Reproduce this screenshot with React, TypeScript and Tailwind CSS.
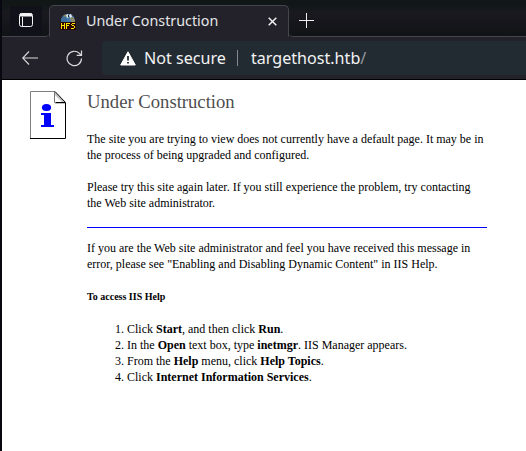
import type { ReactNode } from "react";

function HfsIcon() {
  return (
    <svg width="16" height="16" viewBox="0 0 16 16" className="shrink-0">
      <path d="M1 8V5l2-3 3-2h5l3 3 1 5z" fill="#477caa" />
      <path d="M1 5l2-3 2-1 1 3 2 2-2 2H1z" fill="#3f6d9c" />
      <path d="M3 2l2-1.5 2 1L5 3z" fill="#8b8a58" />
      <path d="M6 1l2-1 1 3-2 1zM9 1l2-1 1 3-2 1z" fill="#e4e8e6" />
      <path d="M10 4l3-1 2 3v2h-4z" fill="#8c8b70" />
      <path d="M8 1h1v2H8z" fill="#15222e" />
      <path d="M0 8h16v8H0z" fill="#2b0808" />
      <path d="M1 9h1v2h2V9h1v6H4v-3H2v3H1zM6 9h4v1H7v1h2v1H7v3H6zM12 9h3v1h-3zM11 10h1v1h-1zM12 11h2v1h-2zM14 12h1v2h-1zM11 14h3v1h-3z" fill="#ffe600" shapeRendering="crispEdges" />
    </svg>
  );
}

function TabStrip() {
  return (
    <div className="flex h-[37px] shrink-0 bg-gradient-to-b from-[#101716] from-10% via-[#1a1920] via-35% to-[#101316]">
      <div className="flex w-[47px] shrink-0 items-end rounded-br-[4px] border-b border-[#45454d] pb-[2px]">
        <div className="ml-2 flex h-[28px] w-[32px] items-center justify-center bg-[#11111a]">
          <svg width="14" height="14" viewBox="0 0 14 14" fill="none" stroke="#f4f4f6">
            <rect x=".5" y=".5" width="13" height="13" rx="2" />
            <path d="M1 2h12" strokeWidth="3" />
            <path d="M3.5 4v9" />
          </svg>
        </div>
      </div>
      <div className="mt-[5px] flex w-[240px] shrink-0 items-center rounded-t-[5px] border border-b-0 border-[#45454d] bg-[#23222a] pl-[10px] pr-[11px]">
        <HfsIcon />
        <span className="ml-[10px] whitespace-nowrap pb-[2px] font-['Noto_Sans',sans-serif] text-[14.3px] leading-5 text-[#e6e6e9]">Under Construction</span>
        <svg className="ml-auto" width="9" height="9" viewBox="0 0 9 9" stroke="#f0f0f2" strokeWidth="1.5"><path d="M.7.7l7.6 7.6M8.3.7L.7 8.3" /></svg>
      </div>
      <div className="flex flex-1 rounded-bl-[4px] border-b border-[#45454d] pl-[10px] pt-[13px]">
        <svg width="15" height="15" viewBox="0 0 15 15" stroke="#eeeeef"><path d="M0 7.5h15M7.5 0v15" /></svg>
      </div>
    </div>
  );
}

function Toolbar() {
  return (
    <div className="flex h-[43px] shrink-0 border-b border-black bg-[#23222a] pt-1">
      <div className="flex h-[34px] w-[100px] items-center pl-5">
        <svg width="16" height="14" viewBox="0 0 16 14" fill="none" stroke="#d9d9dc" strokeWidth="1.1"><path d="M16 7H.7M7 .5L.7 7 7 13.5" /></svg>
        <svg className="ml-[28px]" width="17" height="17" viewBox="0 0 17 17" fill="none" stroke="#d9d9dc" strokeWidth="1.2"><path d="M15.5 8.5A7.2 7.2 0 1 1 13.4 3.4L15 5M15.5 .5v4.8h-4.8" /></svg>
      </div>
      <div className="flex h-[34px] flex-1 items-center rounded-l-[4px] bg-[#232b32] pl-[18px] font-['Noto_Sans',sans-serif] text-[16.1px] text-[#f3f3f4]">
        <svg width="16" height="15" viewBox="0 0 16 15">
          <path d="M8 .8L15.3 14H.7z" fill="#fff" stroke="#fff" strokeLinejoin="round" />
          <path d="M8 5v4.5M8 11v1.5" stroke="#232b32" strokeWidth="1.8" />
        </svg>
        <span className="ml-2 w-[82px] whitespace-nowrap">Not secure</span>
        <span className="ml-[11px] h-4 w-px bg-[#858a8e]" />
        <span className="ml-[13px] whitespace-nowrap">targethost.htb<span className="text-[#93999f]">/</span></span>
      </div>
    </div>
  );
}

function InfoPageIcon() {
  return (
    <svg width="36" height="48" viewBox="0 0 36 48" className="ml-[28px] mt-[11px] shrink-0">
      <path d="M0 0h25l11 11v37H0z" fill="#fff" />
      <path d="M.5 47V.5H25" fill="none" stroke="#808080" />
      <path d="M25 1l10 10v2H25v-2h7l-7-7z" fill="#c0c0c0" />
      <path d="M24.5 0v11.5H35" fill="none" stroke="#777" />
      <path d="M25 .5l10.5 11V47.5H0" fill="none" stroke="#000" />
      <path d="M26 11.5h9" stroke="#000" />
      <ellipse cx="16.5" cy="16.5" rx="4.6" ry="3.5" fill="#00f" />
      <path d="M11 22h10v12h3v2H11v-2h3V24h-3z" fill="#00f" />
    </svg>
  );
}

function Step({ children }: { children: ReactNode }) {
  return <li>{children}</li>;
}

function ConstructionPage() {
  return (
    <main className="flex flex-1 bg-white font-['Liberation_Serif',serif] text-[12px] leading-4 text-black">
      <InfoPageIcon />
      <article className="ml-[21px] w-[400px] whitespace-nowrap pt-[10px]">
        <h1 className="text-[18.67px] leading-6 text-[#4e4e4e]">Under Construction</h1>
        <p className="mt-[17px]">The site you are trying to view does not currently have a default page. It may be in<br />the process of being upgraded and configured.</p>
        <p className="mt-4">Please try this site again later. If you still experience the problem, try contacting<br />the Web site administrator.</p>
        <hr className="mt-4 border-t border-[#0000ff]" />
        <p className="mt-3">If you are the Web site administrator and feel you have received this message in<br />error, please see "Enabling and Disabling Dynamic Content" in IIS Help.</p>
        <h2 className="mt-[17px] text-[10px] font-bold leading-4">To access IIS Help</h2>
        <ol className="mt-4 list-decimal pl-10">
          <Step>Click <b>Start</b>, and then click <b>Run</b>.</Step>
          <Step>In the <b>Open</b> text box, type <b>inetmgr</b>. IIS Manager appears.</Step>
          <Step>From the <b>Help</b> menu, click <b>Help Topics</b>.</Step>
          <Step>Click <b>Internet Information Services</b>.</Step>
        </ol>
      </article>
    </main>
  );
}

export default function App() {
  return (
    <div className="flex h-screen w-screen flex-col overflow-hidden border-l-2 border-[#080811]">
      <TabStrip />
      <Toolbar />
      <ConstructionPage />
    </div>
  );
}
